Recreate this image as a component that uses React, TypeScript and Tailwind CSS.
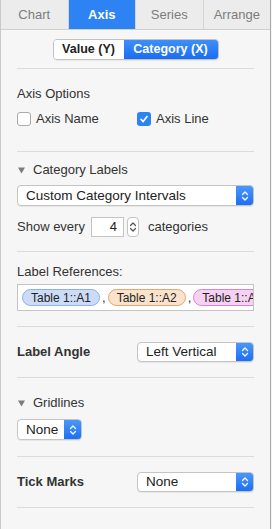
const font = { fontFamily: '"Liberation Sans", Arial, sans-serif' };

function Chevrons({ color = "white" }: { color?: string }) {
  return (
    <svg width="8" height="12" viewBox="0 0 8 12" fill="none">
      <path d="M1.5 4.5 L4 2 L6.5 4.5" stroke={color} strokeWidth="1.3" strokeLinecap="round" strokeLinejoin="round" />
      <path d="M1.5 7.5 L4 10 L6.5 7.5" stroke={color} strokeWidth="1.3" strokeLinecap="round" strokeLinejoin="round" />
    </svg>
  );
}

function Select({ label, className }: { label: string; className: string }) {
  return (
    <div
      className={`flex items-stretch bg-white border border-[#c4c4c4] rounded-[4px] shadow-[0_1px_0_rgba(0,0,0,0.06)] overflow-hidden font-normal ${className}`}
    >
      <div className="flex-1 flex items-center pl-[8px] text-[13.5px] text-[#222] leading-none">{label}</div>
      <div className="w-[17px] flex items-center justify-center bg-gradient-to-b from-[#4a97fb] to-[#1c6ef5]">
        <Chevrons />
      </div>
    </div>
  );
}

function Triangle() {
  return (
    <svg width="7" height="7" viewBox="0 0 8 7" className="mr-[8px] ml-[1px]">
      <path d="M0 0 H8 L4 7 Z" fill="#7d7d7d" />
    </svg>
  );
}

function Separator() {
  return <div className="h-px bg-[#dcdcdc]" />;
}

function Token({ text, cls }: { text: string; cls: string }) {
  return (
    <div className={`h-[17px] shrink-0 flex items-center px-[8px] rounded-full border text-[12px] text-[#222] leading-none ${cls}`}>
      {text}
    </div>
  );
}

export default function App() {
  const tabs = ["Chart", "Axis", "Series", "Arrange"];
  return (
    <div className="w-[272px] h-[529px] bg-[#f6f6f6]" style={font}>
      <div className="w-[271px] h-[529px] border-l border-r border-l-[#c9c9c9] border-r-[#a9a9a9] flex flex-col">
        <div className="h-[30px] flex bg-[#ececec] border-b border-[#cfcfcf]">
          {tabs.map((t, i) => (
            <div
              key={t}
              className={`flex-1 flex items-center justify-center text-[13px] ${
                t === "Axis"
                  ? "bg-[#2d83f3] text-white font-bold"
                  : "text-[#7c7c7c]"
              } ${i < 3 ? "border-r border-[#d4d4d4]" : ""}`}
            >
              {t}
            </div>
          ))}
        </div>

        <div className="px-[16px]">
          <div className="pt-[9px] pb-[8px] flex justify-center">
            <div className="flex h-[21px] rounded-[4px] border border-[#c2c2c2] overflow-hidden text-[12.5px] font-bold shadow-[0_1px_0_rgba(0,0,0,0.05)]">
              <div className="w-[70px] flex items-center justify-center bg-white text-[#222]">Value (Y)</div>
              <div className="w-[94px] flex items-center justify-center bg-gradient-to-b from-[#3d8ffb] to-[#1a6cf4] text-white">
                Category (X)
              </div>
            </div>
          </div>
          <Separator />

          <div className="pt-[17px] pb-[24px]">
            <div className="h-[16px] flex items-center text-[13px] text-[#333]">Axis Options</div>
            <div className="mt-[9px] h-[16px] flex items-center text-[13px] text-[#333]">
              <div className="w-[120px] flex items-center">
                <div className="w-[14px] h-[14px] rounded-[3px] border border-[#a9a9a9] bg-white mr-[5px]" />
                Axis Name
              </div>
              <div className="flex items-center">
                <div className="w-[14px] h-[14px] rounded-[3px] bg-[#2d83f3] mr-[5px] flex items-center justify-center">
                  <svg width="10" height="10" viewBox="0 0 10 10" fill="none">
                    <path d="M2 5.3 L4.2 7.6 L8 2.5" stroke="white" strokeWidth="1.6" strokeLinecap="round" strokeLinejoin="round" />
                  </svg>
                </div>
                Axis Line
              </div>
            </div>
          </div>
          <Separator />

          <div className="pt-[10px] pb-[14px]">
            <div className="h-[16px] flex items-center text-[13px] text-[#333]">
              <Triangle />
              Category Labels
            </div>
            <Select label="Custom Category Intervals" className="mt-[7px] h-[21px]" />
            <div className="mt-[11px] h-[20px] flex items-center text-[13px] text-[#333]">
              <span className="w-[74px]">Show every</span>
              <div className="w-[33px] h-[20px] bg-white border border-[#c4c4c4] flex items-center justify-end pr-[6px] text-[#222]">
                4
              </div>
              <div className="ml-[3px] w-[12px] h-[20px] bg-white border border-[#c4c4c4] rounded-[4px] flex items-center justify-center">
                <Chevrons color="#555" />
              </div>
              <span className="ml-[9px]">categories</span>
            </div>
          </div>
          <Separator />

          <div className="pt-[12px] pb-[15px]">
            <div className="h-[16px] flex items-center text-[13px] text-[#333]">Label References:</div>
            <div className="mt-[4px] h-[27px] bg-white border border-[#c4c4c4] flex items-center pl-[4px] overflow-hidden text-[13px] text-[#333]">
              <Token text="Table 1::A1" cls="bg-[#cddcf6] border-[#8db0ec]" />
              <span className="mx-[2px]">,</span>
              <Token text="Table 1::A2" cls="bg-[#fbe2cd] border-[#e7a56c]" />
              <span className="mx-[2px]">,</span>
              <Token text="Table 1::A3" cls="bg-[#f6d2f2] border-[#d982dd]" />
            </div>
          </div>
          <Separator />

          <div className="pt-[15px] pb-[15px]">
            <div className="h-[20px] flex items-center text-[13px] font-bold text-[#333]">
              <span className="w-[120px]">Label Angle</span>
              <Select label="Left Vertical" className="flex-1 h-[20px]" />
            </div>
          </div>
          <Separator />

          <div className="pt-[17px] pb-[16px]">
            <div className="h-[16px] flex items-center text-[13px] text-[#333]">
              <Triangle />
              Gridlines
            </div>
            <Select label="None" className="mt-[8px] h-[21px] w-[65px]" />
          </div>
          <Separator />

          <div className="pt-[15px] pb-[15px]">
            <div className="h-[20px] flex items-center text-[13px] font-bold text-[#333]">
              <span className="w-[120px]">Tick Marks</span>
              <Select label="None" className="flex-1 h-[20px]" />
            </div>
          </div>
          <Separator />
        </div>
      </div>
    </div>
  );
}
